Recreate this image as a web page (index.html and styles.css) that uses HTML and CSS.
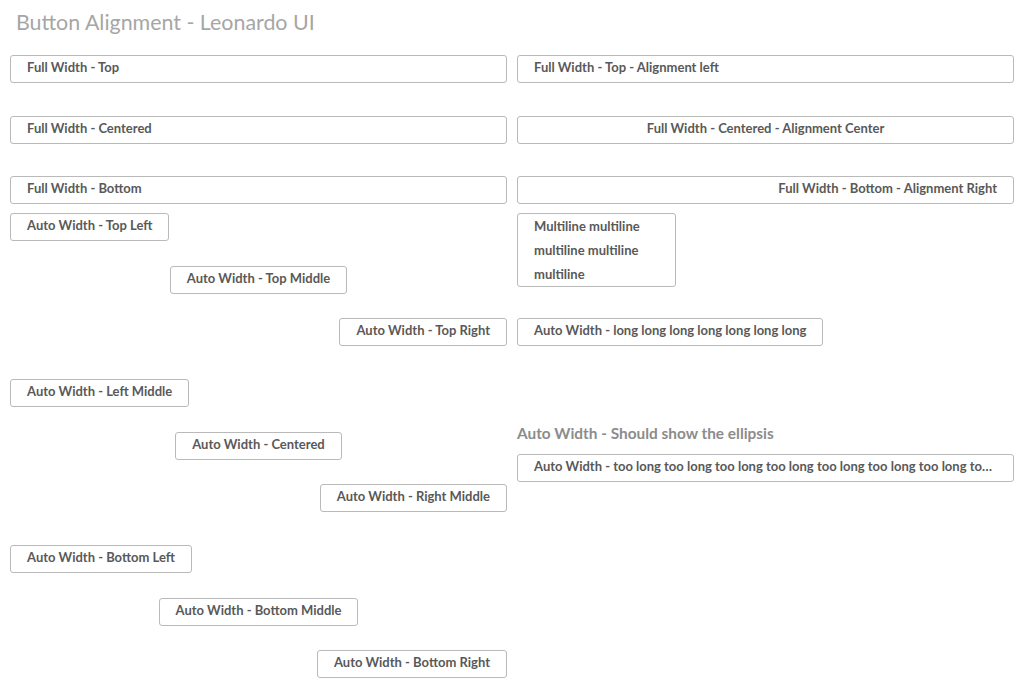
FILE: index.html
```html
<!DOCTYPE html>
<html lang="en">
<head>
<meta charset="utf-8">
<title>Button Alignment - Leonardo UI</title>
<link rel="stylesheet" href="styles.css">
</head>
<body>
<div class="page">
  <h1 class="title">Button Alignment - Leonardo UI</h1>
  <div class="columns">
    <div class="col">
      <div class="full-cells">
        <div class="cell top"><button class="lui-button full">Full Width - Top</button></div>
        <div class="cell middle"><button class="lui-button full">Full Width - Centered</button></div>
        <div class="cell bottom"><button class="lui-button full">Full Width - Bottom</button></div>
      </div>
      <div class="auto-cells">
        <div class="cell top left"><button class="lui-button">Auto Width - Top Left</button></div>
        <div class="cell top center"><button class="lui-button">Auto Width - Top Middle</button></div>
        <div class="cell top right"><button class="lui-button">Auto Width - Top Right</button></div>
        <div class="cell middle left"><button class="lui-button">Auto Width - Left Middle</button></div>
        <div class="cell middle center"><button class="lui-button">Auto Width - Centered</button></div>
        <div class="cell middle right"><button class="lui-button">Auto Width - Right Middle</button></div>
        <div class="cell bottom left"><button class="lui-button">Auto Width - Bottom Left</button></div>
        <div class="cell bottom center"><button class="lui-button">Auto Width - Bottom Middle</button></div>
        <div class="cell bottom right"><button class="lui-button">Auto Width - Bottom Right</button></div>
      </div>
    </div>
    <div class="col">
      <div class="full-cells">
        <div class="cell top"><button class="lui-button full">Full Width - Top - Alignment left</button></div>
        <div class="cell middle"><button class="lui-button full text-center">Full Width - Centered - Alignment Center</button></div>
        <div class="cell bottom"><button class="lui-button full text-right">Full Width - Bottom - Alignment Right</button></div>
      </div>
      <div class="auto-cells">
        <div class="cell top left span2"><button class="lui-button multiline">Multiline multiline multiline multiline multiline</button></div>
        <div class="cell top left"><button class="lui-button">Auto Width - long long long long long long long</button></div>
        <div class="ellipsis-block">
          <div class="section-label">Auto Width - Should show the ellipsis</div>
          <button class="lui-button ellipsis">Auto Width - too long too long too long too long too long too long too long too long too long too long too long</button>
        </div>
      </div>
    </div>
  </div>
</div>
</body>
</html>
```

FILE: styles.css
```css
html, body {
  margin: 0;
  padding: 0;
  background: #ffffff;
}

.page {
  padding: 8px 10px 0 10px;
  font-family: Lato, "Open Sans", "Liberation Sans", sans-serif;
}

.title {
  margin: 0 0 19px 0;
  padding: 0 6px;
  font-size: 21.4px;
  line-height: 28px;
  font-weight: 400;
  color: #a6a6a6;
}

.columns {
  display: grid;
  grid-template-columns: minmax(0, 1fr) minmax(0, 1fr);
  column-gap: 10px;
}

.col {
  min-width: 0;
}

.full-cells {
  display: grid;
  grid-template-rows: repeat(3, 49px);
  row-gap: 1px;
}

.auto-cells {
  margin-top: 9px;
  display: grid;
  grid-template-columns: minmax(0, 1fr);
  grid-auto-rows: 45px;
  row-gap: 7.5px;
}

.cell {
  display: flex;
  min-width: 0;
}

.cell.top { align-items: flex-start; }
.cell.middle { align-items: center; }
.cell.bottom { align-items: flex-end; }
.cell.left { justify-content: flex-start; }
.cell.center { justify-content: center; }
.cell.right { justify-content: flex-end; }
.cell.span2 { grid-row: span 2; }

.lui-button {
  box-sizing: border-box;
  height: 28px;
  margin: 0;
  padding: 0 16px 4px 16px;
  border: 1px solid #bababa;
  border-radius: 3px;
  background: #ffffff;
  color: #595959;
  font-family: Lato, "Open Sans", "Liberation Sans", sans-serif;
  font-size: 13px;
  font-weight: 700;
  line-height: 22px;
  text-align: center;
  white-space: nowrap;
}

.lui-button.full {
  width: 100%;
  text-align: left;
}

.lui-button.full.text-center { text-align: center; }
.lui-button.full.text-right { text-align: right; }

.lui-button.multiline {
  height: auto;
  width: 159px;
  padding-top: 0;
  padding-bottom: 0;
  white-space: normal;
  text-align: left;
  line-height: 24px;
}

.ellipsis-block {
  grid-row: 5 / span 2;
  min-width: 0;
  display: flex;
  flex-direction: column;
  align-items: stretch;
}

.section-label {
  font-size: 15.4px;
  font-weight: 700;
  line-height: 20px;
  color: #8c8c8c;
  margin-bottom: 11px;
}

.lui-button.ellipsis {
  width: 100%;
  overflow: hidden;
  text-overflow: ellipsis;
  text-align: left;
}
```
